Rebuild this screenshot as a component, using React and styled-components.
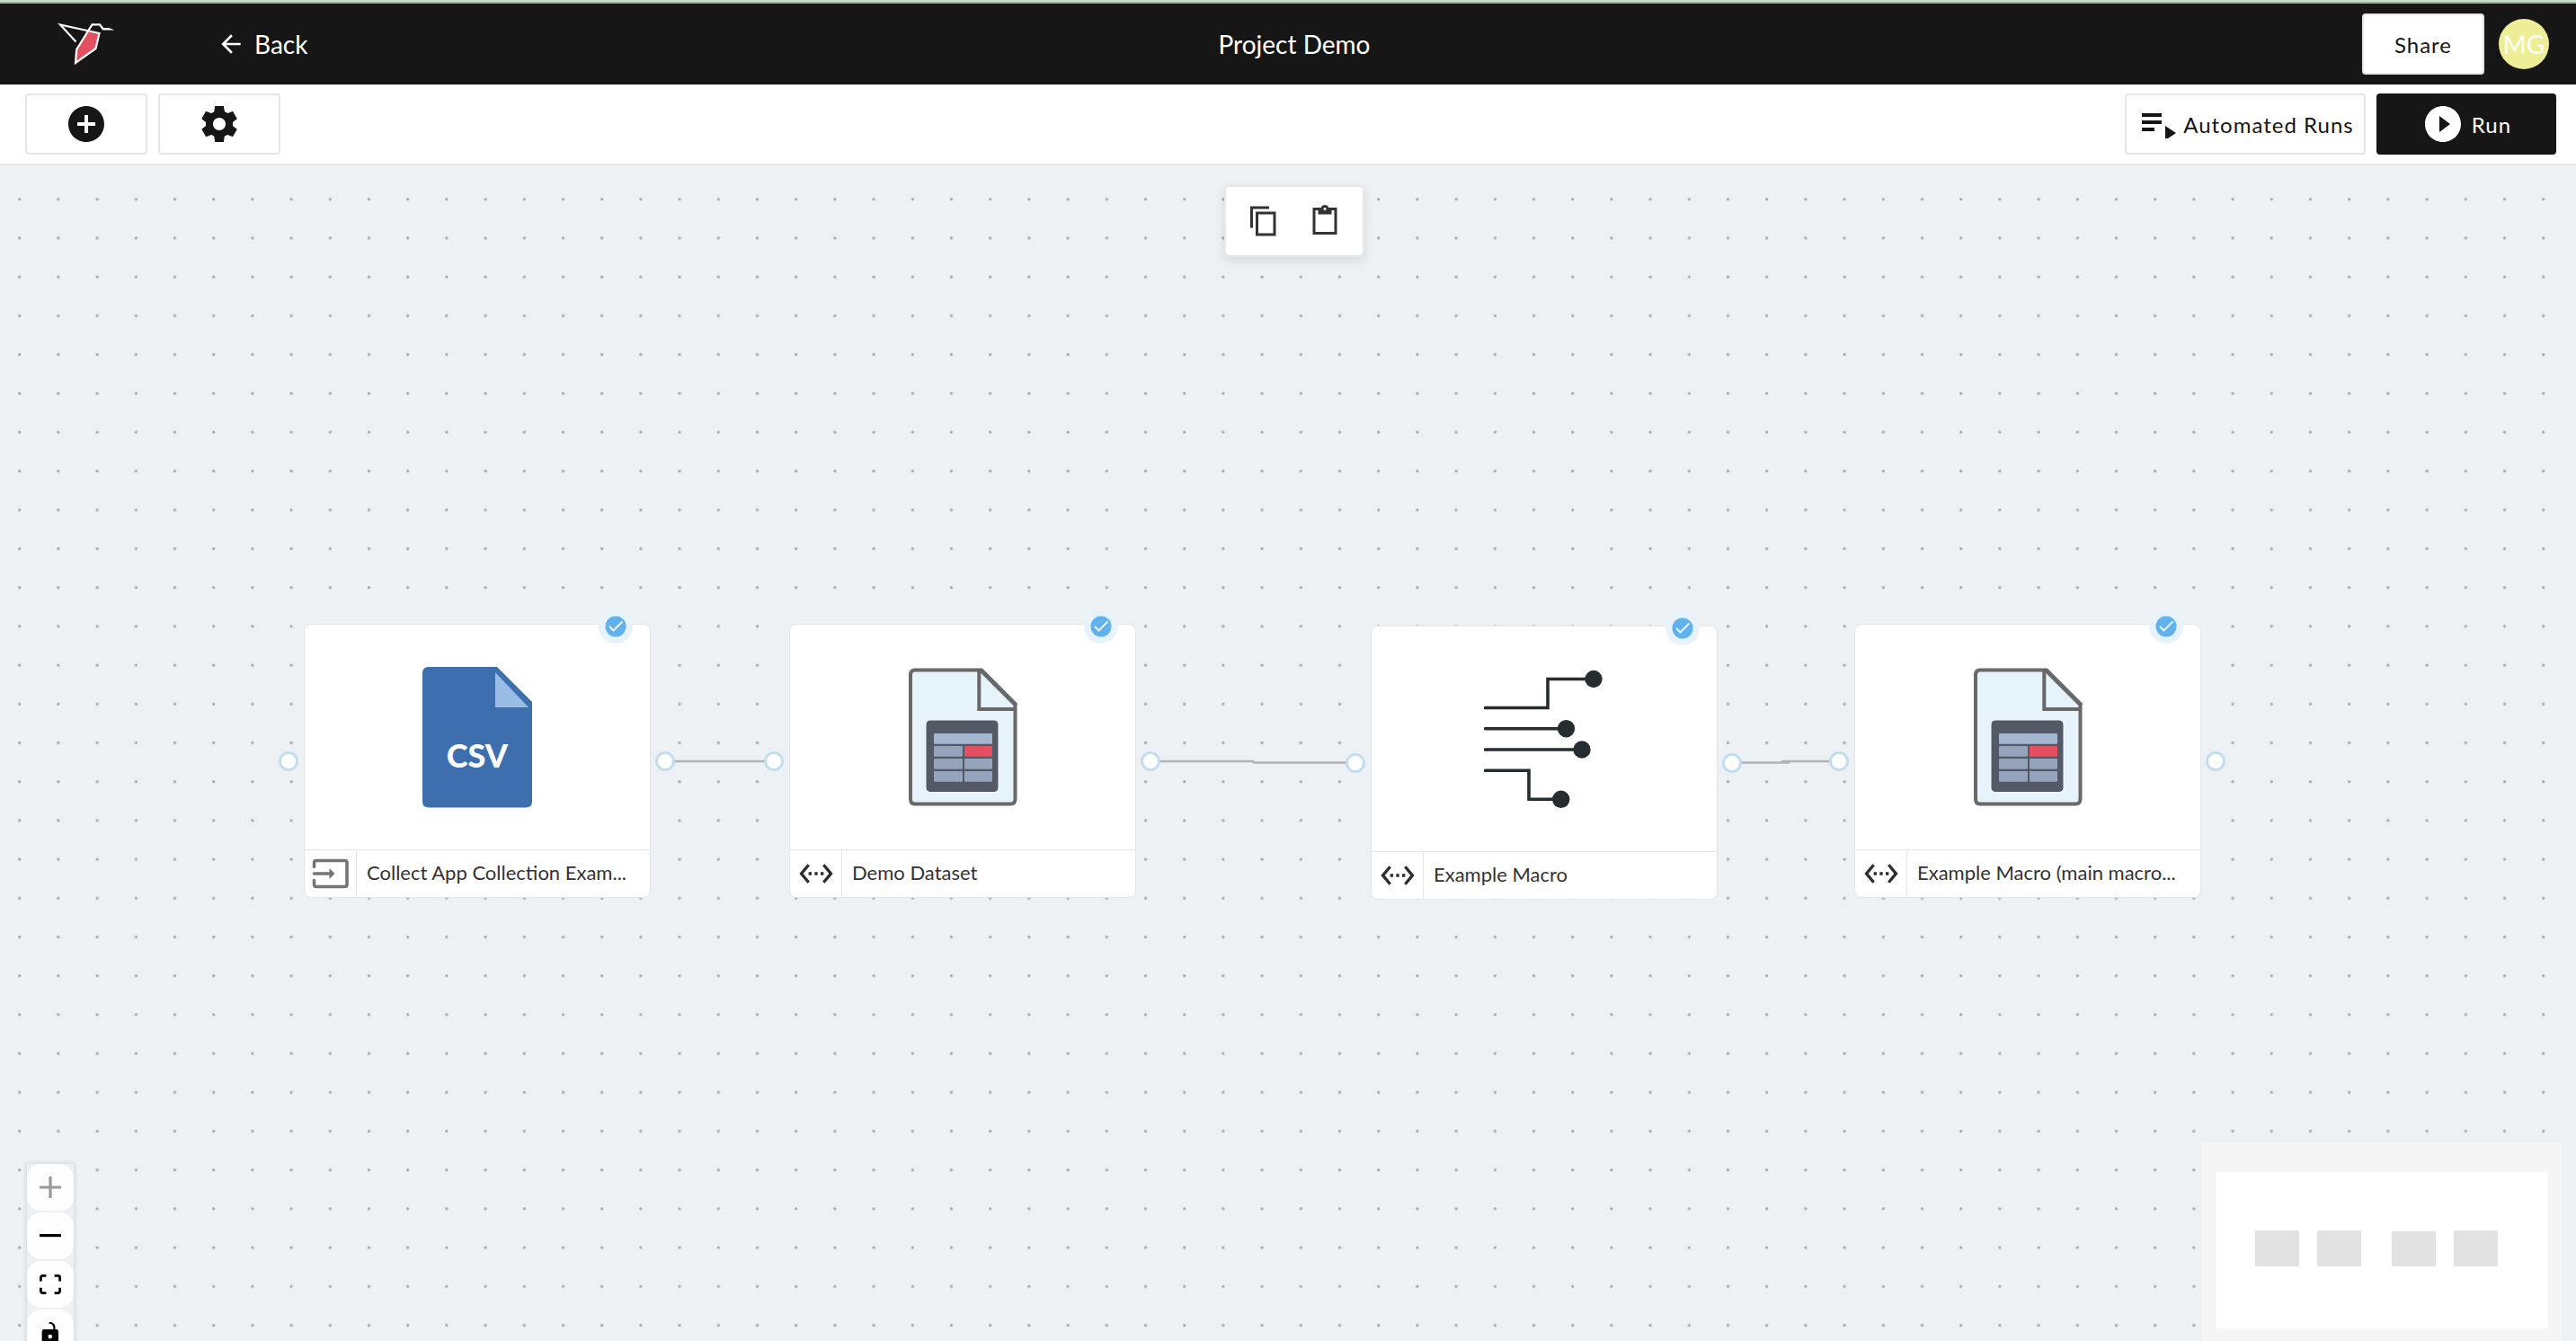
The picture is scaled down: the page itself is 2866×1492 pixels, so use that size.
import React from "react";
import styled, { createGlobalStyle } from "styled-components";
import {
  MdAddCircle,
  MdArrowBack,
  MdPlayCircleFilled,
  MdSettingsEthernet,
} from "react-icons/md";

const nodes = [
  { id: "collect", x: 338, y: 510, kind: "csv", source: true, label: "Collect App Collection Exam..." },
  { id: "dataset", x: 878, y: 510, kind: "dataset", label: "Demo Dataset" },
  { id: "macro", x: 1525, y: 512, kind: "macro", label: "Example Macro" },
  { id: "output", x: 2063, y: 510, kind: "dataset", label: "Example Macro (main macro..." },
];

const edges = [
  "M740 663H861",
  "M1280 663H1394L1395 664.500H1508",
  "M1927 664.500H1991L1982 663H2047",
];

export default function App() {
  return (
    <Page>
      <GlobalStyle />
      <TopStrip />
      <Header>
        <HeaderSide>
          <Logo />
          <BackLink href="#projects">
            <MdArrowBack size={32} />
            Back
          </BackLink>
        </HeaderSide>
        <Title>Project Demo</Title>
        <HeaderSide $end>
          <Button>Share</Button>
          <Avatar>MG</Avatar>
        </HeaderSide>
      </Header>
      <Toolbar>
        <ButtonGroup>
          <Button aria-label="Add">
            <MdAddCircle size={48} />
          </Button>
          <Button aria-label="Settings">
            <SettingsIcon />
          </Button>
        </ButtonGroup>
        <ButtonGroup>
          <Button $wide>
            <AutomatedIcon />
            Automated Runs
          </Button>
          <Button $primary>
            <MdPlayCircleFilled size={48} />
            Run
          </Button>
        </ButtonGroup>
      </Toolbar>
      <Canvas>
        <Layer>
          <defs>
            <pattern id="dots" x="20" y="36" width="43.2" height="43.2" patternUnits="userSpaceOnUse">
              <circle cx="1.7" cy="1.7" r="1.7" fill="#a9abad" />
            </pattern>
          </defs>
          <rect width="100%" height="100%" fill="url(#dots)" />
          {edges.map((d) => (
            <path key={d} d={d} fill="none" stroke="#b1b1b7" strokeWidth="2.500" />
          ))}
        </Layer>
        {nodes.map((node) => (
          <FlowNode key={node.id} node={node} />
        ))}
        <ClipboardBar>
          <IconButton aria-label="Copy">
            <CopyIcon />
          </IconButton>
          <IconButton aria-label="Paste">
            <PasteIcon />
          </IconButton>
        </ClipboardBar>
        <Controls />
        <MiniMap />
      </Canvas>
    </Page>
  );
}

function FlowNode({ node }) {
  return (
    <NodeCard style={{ left: node.x, top: node.y }}>
      <NodeBody>
        {node.kind === "csv" && <CsvIcon />}
        {node.kind === "dataset" && <DatasetIcon />}
        {node.kind === "macro" && <MacroIcon />}
      </NodeBody>
      <NodeFooter>
        <NodeType>{node.source ? <InputIcon /> : <MdSettingsEthernet size={40} />}</NodeType>
        <NodeLabel>{node.label}</NodeLabel>
      </NodeFooter>
      <Badge>
        <svg width="24" height="24" viewBox="0 0 24 24">
          <circle cx="12" cy="12" r="11.500" fill="#61b1ec" />
          <path d="M5 12l4.500 4.500L19.500 6.500" fill="none" stroke="#e7f3fa" strokeWidth="2" />
        </svg>
      </Badge>
      <Handle $side="left" />
      <Handle $side="right" />
    </NodeCard>
  );
}

function Controls() {
  return (
    <ControlPanel>
      <ControlButton aria-label="Zoom in" disabled>
        <svg viewBox="0 0 32 32">
          <path d="M32 18.133H18.133V32h-4.266V18.133H0v-4.266h13.867V0h4.266v13.867H32z" />
        </svg>
      </ControlButton>
      <ControlButton aria-label="Zoom out">
        <svg viewBox="0 0 32 5">
          <path d="M0 0h32v4.2H0z" />
        </svg>
      </ControlButton>
      <ControlButton aria-label="Fit view">
        <svg viewBox="0 0 32 30">
          <path d="M3.692 4.63c0-.53.4-.938.939-.938h5.215V0H4.708C2.13 0 0 2.054 0 4.63v5.216h3.692V4.631zM27.354 0h-5.2v3.692h5.17c.53 0 .984.4.984.939v5.215H32V4.631A4.624 4.624 0 0027.354 0zm.954 24.83c0 .532-.4.94-.939.94h-5.215v3.768h5.215c2.577 0 4.631-2.13 4.631-4.707v-5.139h-3.692v5.139zm-23.677.94c-.531 0-.939-.4-.939-.94v-5.138H0v5.139c0 2.577 2.13 4.707 4.708 4.707h5.138V25.77H4.631z" />
        </svg>
      </ControlButton>
      <ControlButton aria-label="Toggle interactivity">
        <svg viewBox="0 0 25 32">
          <path d="M21.333 10.667H19.81V7.619C19.81 3.429 16.38 0 12.19 0c-4.114 1.828-1.37 2.133.305 2.438 1.676.305 4.42 2.59 4.42 5.181v3.048H3.047A3.056 3.056 0 000 13.714v15.238A3.056 3.056 0 003.048 32h18.285a3.056 3.056 0 003.048-3.048V13.714a3.056 3.056 0 00-3.048-3.047zM12.19 24.533a3.056 3.056 0 01-3.047-3.047 3.056 3.056 0 013.047-3.048 3.056 3.056 0 013.048 3.048 3.056 3.056 0 01-3.048 3.047z" />
        </svg>
      </ControlButton>
    </ControlPanel>
  );
}

function MiniMap() {
  return (
    <MapPanel width="400" height="300" viewBox="0 0 400 300">
      <rect width="400" height="300" fill="#f5f5f5" />
      <rect x="15.500" y="33" width="369" height="174" fill="#fff" />
      <g fill="#e2e2e2">
        <rect x="59" y="98" width="49" height="40" rx="1.500" />
        <rect x="128" y="98" width="49" height="40" rx="1.500" />
        <rect x="211" y="99" width="49" height="39" rx="1.500" />
        <rect x="280" y="98" width="49" height="40" rx="1.500" />
      </g>
    </MapPanel>
  );
}

const Logo = () => (
  <svg width="64" height="48" viewBox="64 25 64 48">
    <path d="M98.500 35L110.500 37.500L106.500 54L84 70L85.500 55Z" fill="#e4505f" />
    <path
      d="M84.500 46.500L67 27.500L110.500 37L106.500 54L84 70L85.200 55L102.500 27.300H111L114.500 32"
      fill="none"
      stroke="#fff"
      strokeWidth="2.200"
    />
    <path d="M113 31H121L127.500 33.500L114 33.500Z" fill="#fff" />
  </svg>
);

const SettingsIcon = () => (
  <svg width="48" height="48" viewBox="0 0 24 24" fill="currentColor">
    <path d="M19.44 12.99l.01-.02c.04-.32.08-.64.08-.98 0-.34-.03-.66-.07-.99l.01.02 2.44-1.92-2.43-4.22-2.87 1.16.01.01c-.52-.4-1.09-.74-1.71-1h.01L14.44 2H9.57l-.44 3.07h.01c-.62.26-1.19.6-1.71 1l.01-.01-2.88-1.17-2.44 4.22 2.44 1.92.01-.02c-.04.33-.07.65-.07.99 0 .34.03.66.08.98l.01.02-2.1 1.65-.33.26 2.43 4.2 2.88-1.15-.02-.04c.53.41 1.1.75 1.73 1.01h-.03L9.58 22h4.85s.03-.18.06-.42l.38-2.65h-.01c.62-.26 1.2-.6 1.73-1.01l-.02.04 2.88 1.15 2.43-4.2s-.14-.12-.33-.26l-2.08-1.66zM12 15.5c-1.93 0-3.5-1.57-3.5-3.5s1.57-3.5 3.5-3.5 3.5 1.57 3.5 3.5-1.57 3.5-3.5 3.5z" />
  </svg>
);

const AutomatedIcon = () => (
  <svg width="38" height="32" viewBox="0 0 38 32" fill="currentColor">
    <path d="M0 4h22v4H0zM0 12h22v4H0zM0 20h14v4H0zM26 18l12 8-12 8z" />
  </svg>
);

const CopyIcon = () => (
  <svg width="36" height="36" viewBox="0 0 24 24" fill="currentColor">
    <path d="M16 1H2v16h2V3h12V1zm5 4H6v18h15V5zm-2 16H8V7h11v14z" />
  </svg>
);

const PasteIcon = () => (
  <svg width="36" height="36" viewBox="0 0 24 24" fill="currentColor">
    <path d="M21 2h-6.18C14.4.84 13.3 0 12 0S9.6.84 9.18 2H3v20h18V2zm-9 0c.55 0 1 .45 1 1s-.45 1-1 1-1-.45-1-1 .45-1 1-1zm7 18H5V4h2v3h10V4h2v16z" />
  </svg>
);

const InputIcon = () => (
  <svg width="42" height="34" viewBox="0 0 42 34" fill="none" stroke="#757575" strokeWidth="3.600">
    <path
      d="M2.500 9.500V5Q2.500 2.500 5 2.500H36.500Q39 2.500 39 5V29Q39 31.500 36.500 31.500H5Q2.500 31.500 2.500 29V24.500"
      strokeLinecap="round"
    />
    <path d="M2.500 17H20" strokeLinecap="round" />
    <path d="M19.500 11L25.500 17L19.500 23Z" fill="#757575" stroke="none" />
  </svg>
);

const CsvIcon = () => (
  <svg width="122" height="157" viewBox="0 0 122 157">
    <path d="M7 0H83L122 39V149.500Q122 156.500 115 156.500H7Q0 156.500 0 149.500V7Q0 0 7 0Z" fill="#3d6eae" />
    <path d="M81 6V45H118Z" fill="#9abde6" />
    <CsvText x="61" y="112">CSV</CsvText>
  </svg>
);

const DatasetIcon = () => (
  <svg width="122" height="157" viewBox="0 0 122 157">
    <path
      d="M8 3.500H82L119.500 41V147Q119.500 152.500 114 152.500H8Q3 152.500 3 147V9Q3 3.500 8 3.500Z"
      fill="#e7f3fa"
      stroke="#696969"
      strokeWidth="4"
    />
    <path d="M79.300 3V47H120" fill="none" stroke="#696969" strokeWidth="4" />
    <path d="M81 3.500L120.500 43" stroke="#696969" strokeWidth="4.500" />
    <rect x="20" y="59" width="81" height="80.500" rx="5" fill="#535a66" stroke="#f3f9fd" strokeWidth="1" />
    <g fill="#95a4bb">
      <rect x="29" y="74" width="65" height="11.700" rx="1" fill="#a4b6d0" />
      <rect x="29" y="88" width="32" height="11.700" rx="1" />
      <rect x="63" y="88" width="31" height="11.700" rx="1" fill="#e4505f" />
      <rect x="29" y="102" width="32" height="11.700" rx="1" />
      <rect x="63" y="102" width="31" height="11.700" rx="1" />
      <rect x="29" y="116" width="32" height="11.700" rx="1" />
      <rect x="63" y="116" width="31" height="11.700" rx="1" />
    </g>
  </svg>
);

const MacroIcon = () => (
  <svg width="134" height="157" viewBox="0 0 134 157" fill="none" stroke="#252d30" strokeWidth="3.600">
    <path
      d="M1.500 43.500H71V11.500H122M1.500 66.700H91M1.500 90H109M1.500 113.300H50V145.300H86"
      strokeLinecap="round"
    />
    <g fill="#252d30" stroke="none">
      <circle cx="122" cy="11.500" r="9.700" />
      <circle cx="91.500" cy="66.700" r="9.700" />
      <circle cx="109" cy="90" r="9.700" />
      <circle cx="85.700" cy="145.300" r="9.700" />
    </g>
  </svg>
);

const GlobalStyle = createGlobalStyle`
  * {
    box-sizing: border-box;
  }

  body {
    margin: 0;
    font-family: Lato, sans-serif;
    color: #161616;
  }

  svg {
    flex-shrink: 0;
  }
`;

const Page = styled.div`
  display: flex;
  flex-direction: column;
  height: 100vh;
  overflow: hidden;
`;

const TopStrip = styled.div`
  height: 4px;
  flex-shrink: 0;
  background: #c9dec6;
  border-bottom: 2px solid #9fae9e;
`;

const Header = styled.header`
  display: grid;
  grid-template-columns: 1fr auto 1fr;
  align-items: center;
  height: 90px;
  flex-shrink: 0;
  padding: 0 30px 0 44px;
  background: #161616;
  color: white;
`;

const HeaderSide = styled.div`
  display: flex;
  align-items: center;
  justify-content: ${(props) => (props.$end ? "flex-end" : "flex-start")};
  gap: ${(props) => (props.$end ? "16px" : "113px")};
  padding-left: 20px;
`;

const BackLink = styled.a`
  display: flex;
  align-items: center;
  gap: 10px;
  color: white;
  font-size: 28px;
  line-height: 36px;
  text-decoration: none;
`;

const Title = styled.h1`
  margin: 0;
  font-size: 28px;
  font-weight: 400;
  line-height: 36px;
`;

const Avatar = styled.div`
  display: flex;
  align-items: center;
  justify-content: center;
  width: 56px;
  height: 56px;
  border-radius: 50%;
  background: #eeee96;
  font-size: 28px;
`;

const Toolbar = styled.div`
  display: flex;
  justify-content: space-between;
  align-items: center;
  height: 90px;
  flex-shrink: 0;
  padding: 0 22px 0 28px;
  background: white;
  border-bottom: 2px solid #e7e7e7;
`;

const ButtonGroup = styled.div`
  display: flex;
  gap: 12px;
`;

const Button = styled.button`
  display: flex;
  align-items: center;
  justify-content: center;
  gap: 8px;
  min-width: ${(props) => (props.$primary ? "200px" : props.$wide ? "268px" : "136px")};
  height: 68px;
  padding: ${(props) => (props.$wide ? "0 8px 0 14px" : "0 12px")};
  border: 2px solid ${(props) => (props.$primary ? "#161616" : "#e7e7e7")};
  border-radius: 4px;
  background: ${(props) => (props.$primary ? "#161616" : "white")};
  color: ${(props) => (props.$primary ? "white" : "#161616")};
  font-family: inherit;
  font-size: 24px;
  letter-spacing: 1px;
`;

const Canvas = styled.main`
  position: relative;
  flex: 1;
  padding-left: 14px;
  overflow: hidden;
  background: #edf1f4;
`;

const Layer = styled.svg`
  position: absolute;
  inset: 0;
  width: 100%;
  height: 100%;
`;

const ClipboardBar = styled.div`
  position: relative;
  display: flex;
  gap: 32px;
  width: fit-content;
  margin: 22px auto 0;
  padding: 20px 24px;
  border: 2px solid #e7e7e7;
  border-radius: 6px;
  background: white;
  box-shadow: 0 4px 12px rgba(0, 0, 0, 0.1);
`;

const IconButton = styled.button`
  display: flex;
  padding: 0;
  border: 0;
  background: none;
  color: #333333;
`;

const NodeCard = styled.article`
  position: absolute;
  width: 386px;
  border: 1px solid #e4e5e6;
  border-radius: 8px;
  background: white;
`;

const NodeBody = styled.div`
  display: flex;
  align-items: center;
  justify-content: center;
  height: 250px;
`;

const NodeFooter = styled.div`
  display: flex;
  height: 53px;
  border-top: 1px solid #e4e5e6;
`;

const NodeType = styled.div`
  display: flex;
  align-items: center;
  justify-content: center;
  width: 58px;
  flex-shrink: 0;
  border-right: 1px solid #e4e5e6;
  color: #2d2d2d;
`;

const NodeLabel = styled.div`
  flex: 1;
  margin: 0 12px 0 11px;
  overflow: hidden;
  color: #333333;
  font-size: 22px;
  line-height: 50px;
  text-overflow: ellipsis;
  white-space: nowrap;
`;

const Badge = styled.span`
  position: absolute;
  top: -17px;
  right: 19px;
  display: flex;
  align-items: center;
  justify-content: center;
  width: 38px;
  height: 38px;
  border-radius: 50%;
  background: #e7f3fa;
`;

const Handle = styled.span`
  position: absolute;
  top: 141px;
  ${(props) => (props.$side === "left" ? "left: -29px;" : "right: -28px;")}
  width: 22px;
  height: 22px;
  border: 3px solid #c1ddef;
  border-radius: 50%;
  background: white;
`;

const CsvText = styled.text`
  fill: white;
  font-size: 36px;
  font-weight: 900;
  text-anchor: middle;
`;

const ControlPanel = styled.div`
  position: absolute;
  left: 30px;
  bottom: -17px;
  display: flex;
  flex-direction: column;
  gap: 2px;
  box-shadow: 0 0 4px 2px rgba(0, 0, 0, 0.08);
`;

const ControlButton = styled.button`
  display: flex;
  align-items: center;
  justify-content: center;
  width: 52px;
  height: 52px;
  padding: 0;
  border: 0;
  border-radius: 16px;
  background: #fefefe;

  svg {
    width: 24px;
    max-height: 24px;
    fill: ${(props) => (props.disabled ? "#999999" : "black")};
  }
`;

const MapPanel = styled.svg`
  position: absolute;
  right: 16px;
  bottom: -79px;
`;
